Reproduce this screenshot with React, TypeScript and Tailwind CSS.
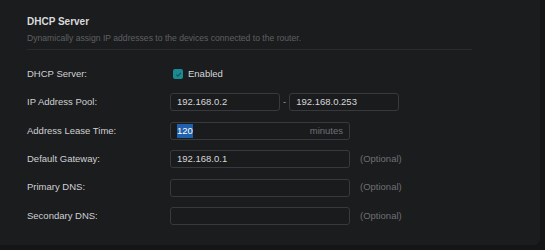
import React from "react";

const font = { fontFamily: '"Liberation Sans", Arial, sans-serif' };

function Row({ label, children }: { label: string; children: React.ReactNode }) {
  return (
    <div className="flex items-center h-[18px]">
      <div className="w-[143px] text-[9.5px] text-[#cfd0d2]">{label}</div>
      <div className="flex items-center">{children}</div>
    </div>
  );
}

function Input({ value, w, suffix, selected }: { value?: string; w: string; suffix?: string; selected?: boolean }) {
  return (
    <div className={`${w} h-[18px] rounded-[3px] border border-[#38393c] bg-[#1a1b1d] flex items-center px-[6px] text-[9.5px] text-[#d6d7d9]`}>
      {selected ? <span className="bg-[#2160ad] text-white">{value}</span> : <span>{value}</span>}
      {suffix && <span className="ml-auto text-[#6f7073]">{suffix}</span>}
    </div>
  );
}

export default function App() {
  return (
    <div className="w-[545px] h-[250px] bg-[#141516] overflow-hidden" style={font}>
      <div className="w-[540px] h-[245px] bg-[#1b1c1e] rounded-br-[6px] pl-[27px] pt-[15px]">
        <div className="text-[10px] font-bold text-[#d9dadc] leading-[12px] mt-[1px]">DHCP Server</div>
        <div className="mt-[5px] text-[8.6px] text-[#5f6063] leading-[11px]">
          Dynamically assign IP addresses to the devices connected to the router.
        </div>
        <div className="mt-[5px] w-[445px] h-px bg-[#2a2b2e]" />
        <div className="mt-[15px] flex flex-col gap-[10.4px]">
          <Row label="DHCP Server:">
            <div className="ml-[3px] w-[10px] h-[10px] rounded-[2px] bg-[#1b8b93] flex items-center justify-center">
              <svg width="7" height="7" viewBox="0 0 8 8">
                <path d="M1.5 4.2 L3.3 6 L6.6 2.2" fill="none" stroke="#1d4e55" strokeWidth="1.3" />
              </svg>
            </div>
            <span className="ml-[5px] text-[9.5px] text-[#d6d7d9]">Enabled</span>
          </Row>
          <Row label="IP Address Pool:">
            <Input value="192.168.0.2" w="w-[110px]" />
            <span className="mx-[3px] text-[9.5px] text-[#9a9b9e]">-</span>
            <Input value="192.168.0.253" w="w-[110px]" />
          </Row>
          <Row label="Address Lease Time:">
            <Input value="120" w="w-[180px]" suffix="minutes" selected />
          </Row>
          <Row label="Default Gateway:">
            <Input value="192.168.0.1" w="w-[180px]" />
            <span className="ml-[10px] text-[9.5px] text-[#6f7073]">(Optional)</span>
          </Row>
          <Row label="Primary DNS:">
            <Input w="w-[180px]" />
            <span className="ml-[10px] text-[9.5px] text-[#6f7073]">(Optional)</span>
          </Row>
          <Row label="Secondary DNS:">
            <Input w="w-[180px]" />
            <span className="ml-[10px] text-[9.5px] text-[#6f7073]">(Optional)</span>
          </Row>
        </div>
      </div>
    </div>
  );
}
